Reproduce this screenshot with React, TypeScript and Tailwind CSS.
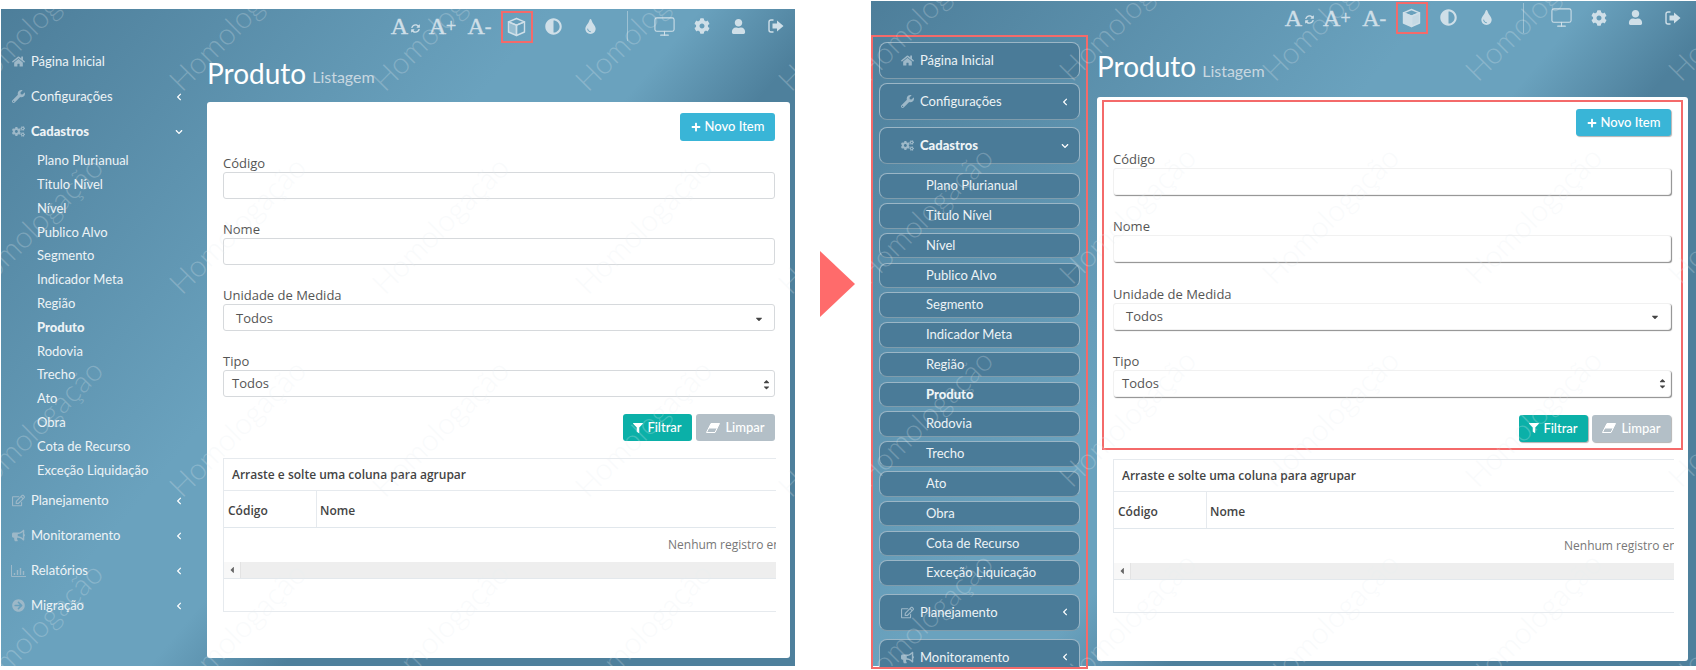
import React from 'react';
import { Monitor } from 'lucide-react';
import {
  FaAdjust,
  FaArrowCircleRight,
  FaBullhorn,
  FaCaretDown,
  FaCaretLeft,
  FaCaretUp,
  FaChevronDown,
  FaChevronLeft,
  FaCog,
  FaCogs,
  FaFilter,
  FaHome,
  FaPlus,
  FaRegEdit,
  FaSyncAlt,
  FaTint,
  FaUser,
  FaWrench,
} from 'react-icons/fa';

const lato = 'font-["Lato",sans-serif]';
const openSans = 'font-["Open_Sans",sans-serif]';

const subItems = [
  'Plano Plurianual',
  'Titulo Nível',
  'Nível',
  'Publico Alvo',
  'Segmento',
  'Indicador Meta',
  'Região',
  'Produto',
  'Rodovia',
  'Trecho',
  'Ato',
  'Obra',
  'Cota de Recurso',
];

const ChartIcon = () => (
  <svg width="15" height="12" viewBox="0 0 15 12" fill="none" stroke="currentColor">
    <path d="M0.5 0v11.5H15" />
    <path d="M3.5 10V8M6.5 10V5M9.5 10V3M12.5 10V6" strokeWidth="1.4" />
  </svg>
);

const CubeIcon = ({ solid }: { solid: boolean }) => (
  <svg width="19" height="20" viewBox="0 0 19 20" stroke="currentColor" strokeWidth="1.4" strokeLinejoin="round">
    <path d="M9.5 1.5 17.5 4.8 9.5 8.2 1.5 4.8Z" fill="none" />
    <path d="M1.5 4.8 9.5 8.2V18.5L1.5 15Z" fill="currentColor" fillOpacity={solid ? 1 : 0.45} />
    <path d="M17.5 4.8 9.5 8.2V18.5L17.5 15Z" fill="currentColor" fillOpacity={solid ? 0.9 : 0} />
  </svg>
);

const LogoutIcon = () => (
  <svg width="16" height="14" viewBox="0 0 16 14" fill="currentColor">
    <path d="M5.5 1H3a2 2 0 0 0-2 2v8a2 2 0 0 0 2 2h2.5" fill="none" stroke="currentColor" strokeWidth="1.4" />
    <path d="M9 1.5 15.5 7 9 12.5V9.5H4.5v-5H9Z" />
  </svg>
);

const EraserIcon = () => (
  <svg width="14" height="10" viewBox="0 0 14 10">
    <path d="M5 .5H13.5L9 9.5H.5Z" fill="none" stroke="currentColor" />
    <path d="M5 .5H13.5L11 5.5H2.5Z" fill="currentColor" />
  </svg>
);

const Watermarks = ({ x, y }: { x: number; y: number }) => {
  const marks: { left: number; top: number }[] = [];
  for (let col = -1; col < 4; col++) {
    for (let row = 0; row < 4; row++) {
      marks.push({ left: x + col * 203, top: y + row * 203 });
    }
  }
  return (
    <div className="absolute inset-0 z-30 overflow-hidden pointer-events-none">
      {marks.map((mark) => (
        <span
          key={`${mark.left}-${mark.top}`}
          className={`absolute origin-bottom-left -rotate-45 whitespace-nowrap text-[30px] leading-none font-light text-[#e8eef2]/25 ${lato}`}
          style={{ left: mark.left, top: mark.top - 30 }}
        >
          Homologação
        </span>
      ))}
    </div>
  );
};

interface MenuItemProps {
  label: string;
  icon?: React.ReactNode;
  boxed: boolean;
  active?: boolean;
  chevron?: 'left' | 'down';
}

const MenuItem = ({ label, icon, boxed, active, chevron }: MenuItemProps) => (
  <div
    className={`flex items-center shrink-0 text-[13px] text-[#edf3f6] ${lato} ${active ? 'font-black' : ''} ${
      boxed
        ? 'h-[37px] pl-[15px] pr-[10px] rounded-lg border border-white/45 border-b-[#7f9cac] bg-[#4a7b98]'
        : 'h-[35px] pl-[5px] pr-[24px]'
    }`}
  >
    <span className="w-[25px] flex justify-center text-[#9db8c8] text-[13px]">{icon}</span>
    <span>{label}</span>
    {chevron === 'left' && <FaChevronLeft className="ml-auto text-white" size={8} />}
    {chevron === 'down' && <FaChevronDown className="ml-auto text-white" size={8} />}
  </div>
);

const SubItem = ({ label, boxed, active }: { label: string; boxed: boolean; active?: boolean }) => (
  <div
    className={`flex items-center shrink-0 text-[13px] text-[#edf3f6] ${lato} ${active ? 'font-black' : ''} ${
      boxed
        ? 'h-[25.6px] pl-[46px] rounded-lg border border-white/45 border-b-[#7f9cac] bg-[#4a7b98]'
        : 'h-[23.8px] pl-[36px]'
    }`}
  >
    {label}
  </div>
);

const Sidebar = ({ boxed }: { boxed: boolean }) => (
  <nav
    className={
      boxed
        ? 'relative z-20 flex flex-col shrink-0 w-[217px] h-[634px] border-2 border-[#f46a6a] pt-[5px] px-[6px] overflow-hidden'
        : 'flex flex-col shrink-0 w-[206px] pt-px'
    }
  >
    <div className={boxed ? 'flex flex-col gap-1' : 'flex flex-col'}>
      <MenuItem boxed={boxed} label="Página Inicial" icon={<FaHome />} />
      <MenuItem boxed={boxed} label="Configurações" icon={<FaWrench />} chevron="left" />
    </div>
    <div className={boxed ? 'mt-[7px] flex flex-col gap-[4.2px]' : 'flex flex-col'}>
      <div className={boxed ? 'mb-[5px]' : ''}>
        <MenuItem boxed={boxed} label="Cadastros" icon={<FaCogs />} chevron="down" active />
      </div>
      {subItems.map((item) => (
        <SubItem key={item} boxed={boxed} label={item} active={item === 'Produto'} />
      ))}
      <SubItem boxed={boxed} label={boxed ? 'Exceção Liquicação' : 'Exceção Liquidação'} />
    </div>
    <div className={boxed ? 'mt-2 flex flex-col gap-2' : 'flex flex-col mt-px'}>
      <MenuItem boxed={boxed} label="Planejamento" icon={<FaRegEdit />} chevron="left" />
      <MenuItem boxed={boxed} label="Monitoramento" icon={<FaBullhorn />} chevron="left" />
      {!boxed && <MenuItem boxed={boxed} label="Relatórios" icon={<ChartIcon />} chevron="left" />}
      {!boxed && <MenuItem boxed={boxed} label="Migração" icon={<FaArrowCircleRight />} chevron="left" />}
    </div>
  </nav>
);

const TopBar = ({ annotated }: { annotated: boolean }) => {
  const cell = `flex items-center justify-center shrink-0 text-[#cfdfe8] ${annotated ? 'w-[37.4px] h-[33px]' : 'w-[37px] h-[32px]'}`;
  const serif = 'font-["Liberation_Serif",serif] text-[24px] leading-none [-webkit-text-stroke:0.4px_#cfdfe8]';
  return (
    <header className={`flex justify-end h-[34px] ${annotated ? 'pr-[4px]' : 'pr-[1px] pt-[1px]'}`}>
      <div className={`${cell} ${serif}`}>
        A<FaSyncAlt size={9} className="ml-[3px] mt-1" />
      </div>
      <div className={`${cell} ${serif}`}>
        A<span className="text-[18px]">+</span>
      </div>
      <div className={`${cell} ${serif}`}>
        A<span className="text-[20px]">-</span>
      </div>
      <div className={`${cell} ${annotated ? '' : 'pt-px'}`}>
        <div className="w-[32px] h-[32px] border-2 border-[#f46a6a] flex items-center justify-center">
          <CubeIcon solid={annotated} />
        </div>
      </div>
      <div className={cell}>
        <FaAdjust size={17} />
      </div>
      <div className={cell}>
        <FaTint size={15} />
      </div>
      <div className={cell}>
        <div className="w-px h-[30px] bg-[#cfdfe8]/50" />
      </div>
      <div className={cell}>
        <Monitor size={23} strokeWidth={1.1} />
      </div>
      <div className={cell}>
        <FaCog size={16} />
      </div>
      <div className={cell}>
        <FaUser size={15} />
      </div>
      <div className={cell}>
        <LogoutIcon />
      </div>
    </header>
  );
};

const Field = ({ label, children }: { label: string; children: React.ReactNode }) => (
  <div>
    <label className={`block h-[18px] text-[13px] leading-[19px] text-[#555] ${openSans}`}>{label}</label>
    {children}
  </div>
);

const Form = ({ annotated }: { annotated: boolean }) => {
  const box = annotated
    ? 'h-[27px] w-full rounded-[3px] border border-[#f1f1f1] shadow-[1px_1px_1px_rgba(0,0,0,0.45)] bg-white'
    : 'h-[27px] w-full rounded-[3px] border border-[#d6d9dc] bg-white';
  const button = `flex items-center justify-center gap-1 rounded-[3px] text-white text-[13px] font-medium ${lato} ${
    annotated ? 'shadow-[1px_1px_1px_rgba(0,0,0,0.3)]' : ''
  }`;
  return (
    <>
      <div className="flex justify-end">
        <button className={`${button} w-[95px] bg-[#39b5d7] ${annotated ? 'h-[27px]' : 'h-[28px]'}`}>
          <FaPlus size={10} /> Novo Item
        </button>
      </div>
      <div className={`flex flex-col ${annotated ? 'mt-[14px] gap-[22.3px]' : 'mt-[13px] gap-[21px]'}`}>
        <Field label="Código">
          <input className={`block ${box}`} />
        </Field>
        <Field label="Nome">
          <input className={`block ${box}`} />
        </Field>
        <Field label="Unidade de Medida">
          <div className={`flex items-center justify-between pl-3 pr-[10px] pt-[2px] text-[13px] text-[#555] ${openSans} ${box}`}>
            Todos
            <FaCaretDown size={10} className="text-[#444]" />
          </div>
        </Field>
        <Field label="Tipo">
          <div className={`flex items-center justify-between pl-2 pr-[3px] pt-px text-[13px] text-[#555] ${openSans} ${box}`}>
            Todos
            <span className="flex flex-col text-[#444]">
              <FaCaretUp size={9} className="-mb-[3px]" />
              <FaCaretDown size={9} />
            </span>
          </div>
        </Field>
      </div>
      <div className={`flex justify-end gap-1 ${annotated ? 'mt-[18px]' : 'mt-[17px]'}`}>
        <button className={`${button} w-[69px] h-[27px] bg-[#0bb0a8]`}>
          <FaFilter size={10} /> Filtrar
        </button>
        <button className={`${button} w-[79px] h-[27px] bg-[#b3bfc7] gap-[5px]`}>
          <EraserIcon /> Limpar
        </button>
      </div>
    </>
  );
};

const Grid = ({ annotated }: { annotated: boolean }) => (
  <div className={`border-l border-[#e6eaee] ${openSans} text-[12px] text-[#444]`}>
    <div className="h-[33px] flex items-center pl-2 pt-px border-y border-[#e6eaee] font-semibold">
      Arraste e solte uma coluna para agrupar
    </div>
    <div className="h-[37px] flex border-b border-[#e1e7ec] font-semibold">
      <div className="w-[93px] pl-1 pt-[3px] flex items-center border-r border-[#e6eaee]">Código</div>
      <div className="pl-[3px] pt-[3px] flex items-center">Nome</div>
    </div>
    <div
      className={`h-[34px] flex items-center whitespace-nowrap overflow-hidden text-[#777] ${
        annotated ? 'pl-[450px]' : 'pl-[444px]'
      }`}
    >
      Nenhum registro encontrado
    </div>
    <div className="h-[17px] flex bg-[#eeeeee] border-b border-[#e3e8ec]">
      <div className="w-[17px] flex items-center justify-center bg-[#f8f8f8] border-r border-[#e3e3e3] text-[#666]">
        <FaCaretLeft size={10} />
      </div>
    </div>
    <div className="h-[33px] border-b border-[#e6eaee]" />
  </div>
);

const Screen = ({ annotated }: { annotated: boolean }) => (
  <section
    className={`relative shrink-0 bg-[linear-gradient(130deg,#4d7e9a_0%,#6aa2be_41%,#6aa2be_52%,#4e809c_62%,#4e809c_100%)] ${
      annotated ? 'w-[825px] h-[665px] mt-px' : 'w-[794px] h-[657px] mt-[9px] ml-px'
    }`}
  >
    <Watermarks x={annotated ? 203 : 183} y={annotated ? 84 : 86} />
    <TopBar annotated={annotated} />
    <div className="flex">
      <Sidebar boxed={annotated} />
      <main className={annotated ? 'ml-[9px] w-[591px]' : 'w-[583px]'}>
        <div className={`flex items-center gap-[6px] ${annotated ? 'h-[62px]' : 'h-[59px]'} ${lato} text-white`}>
          <h1 className="text-[28px] leading-none">Produto</h1>
          <small className="text-[16px] leading-none mt-[9px] text-[#c8d7e0]">Listagem</small>
        </div>
        {annotated ? (
          <div className="h-[564px] rounded-[3px] bg-white pt-[3px] px-[5px]">
            <div className="h-[350px] border-2 border-[#f46a6a] pt-[7px] pl-[9px] pr-[10px]">
              <Form annotated />
            </div>
            <div className="mt-[9px] ml-[11px] mr-[9px]">
              <Grid annotated />
            </div>
          </div>
        ) : (
          <div className="h-[556px] rounded-[3px] bg-white pt-[11px] pl-4 pr-[15px]">
            <Form annotated={false} />
            <div className="mt-[17px] mr-[-1px]">
              <Grid annotated={false} />
            </div>
          </div>
        )}
      </main>
    </div>
  </section>
);

export default function App() {
  return (
    <div className="flex w-[1696px] h-[670px] bg-white overflow-hidden">
      <Screen annotated={false} />
      <div className="flex-1 flex items-center justify-center pl-2 pb-[103px]">
        <svg width="35" height="66" viewBox="0 0 35 66">
          <path d="M0 0 35 33 0 66Z" fill="#ff6b6b" />
        </svg>
      </div>
      <Screen annotated />
    </div>
  );
}
